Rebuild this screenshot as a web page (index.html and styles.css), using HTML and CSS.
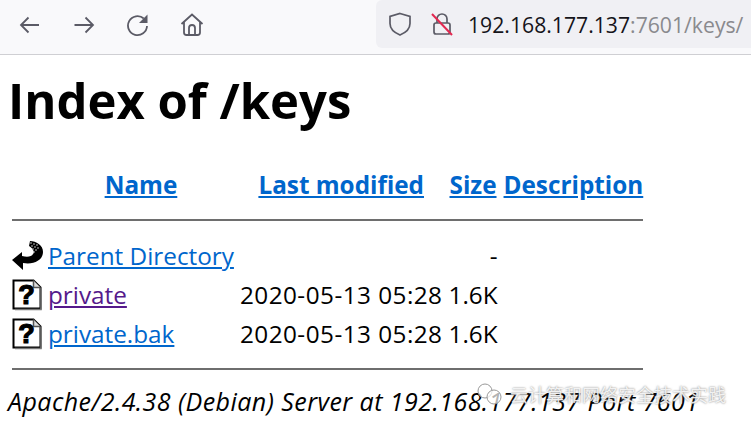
FILE: index.html
```html
<!DOCTYPE html>
<html lang="en">

<head>
    <meta charset="UTF-8">
    <title>Index of /keys</title>
    <link rel="stylesheet" href="styles.css">
</head>

<body>
    <div class="toolbar">
        <div class="nav-buttons">
            <svg class="icon" viewBox="0 0 24 24"><path d="M21 12H3M10.500 4.500 3 12l7.500 7.500"/></svg>
            <svg class="icon" viewBox="0 0 24 24"><path d="M2.500 12H21M13.500 4.500 21 12l-7.500 7.500"/></svg>
            <svg class="icon" viewBox="0 0 24 24"><path d="M21 13a9.500 9.500 0 1 1-3.200-7.500"/><path class="solid" d="M21.500 1.500v8.500h-8.500z"/></svg>
            <svg class="icon" viewBox="0 0 24 24"><path d="M1.500 11 12 1.500 22.500 11M4 9v10.500a2.500 2.500 0 0 0 2.500 2.500h11a2.500 2.500 0 0 0 2.500-2.500V9M9 22v-7a3 3 0 0 1 6 0v7"/></svg>
        </div>
        <div class="urlbar">
            <svg class="icon-small" viewBox="0 0 24 24"><path d="M12 1.500 22 4.500v7c0 5-4 9-10 11.500C6 20.500 2 16.500 2 11.500v-7z"/></svg>
            <svg class="icon-small lock" viewBox="0 0 24 24"><path d="M7 11V7a5 5 0 0 1 10 0v4M6 11h12a2 2 0 0 1 2 2v7a2 2 0 0 1-2 2H6a2 2 0 0 1-2-2v-7a2 2 0 0 1 2-2z"/><path class="slash" d="M2 2l20 21"/></svg>
            <span class="url">192.168.177.137<span class="url-rest">:7601/keys/</span></span>
        </div>
    </div>

    <div class="page">
        <h1>Index of /keys</h1>
        <table>
            <tr>
                <th class="col-icon"></th>
                <th class="col-name"><a href="#">Name</a></th>
                <th><a href="#">Last modified</a></th>
                <th><a href="#">Size</a></th>
                <th><a href="#">Description</a></th>
            </tr>
            <tr>
                <th colspan="5" class="rule-cell"><hr></th>
            </tr>
            <tr>
                <td class="col-icon">
                    <svg class="file-icon" viewBox="0 0 32 32">
                        <path class="back-arrow" d="M0 20 10 12v4c7 2 11 0 12-4-1-3-3-5-5-6l1-5c6 0 13 4 13 11 0 8-9 13-20 11v7z"/>
                        <path class="back-dots" d="M18 3h2M21 4h2M24 5h2M19 6h2M22 7h2M25 8h2M20 9h2M23 10h2M21 12h2"/>
                    </svg>
                </td>
                <td class="col-name"><a href="#">Parent Directory</a></td>
                <td></td>
                <td class="size">-</td>
                <td></td>
            </tr>
            <tr>
                <td class="col-icon">
                    <svg class="file-icon" viewBox="0 0 32 32">
                        <path class="sheet" d="M1.500 1.500h20l7 7v21h-27z"/>
                        <path class="fold" d="M21.500 1.500v7h7"/>
                        <path class="shade" d="M29 9v21.500H3"/>
                        <text class="mark" x="14.500" y="25">?</text>
                    </svg>
                </td>
                <td class="col-name"><a class="visited" href="#">private</a></td>
                <td class="date">2020-05-13 05:28</td>
                <td class="size">1.6K</td>
                <td></td>
            </tr>
            <tr>
                <td class="col-icon">
                    <svg class="file-icon" viewBox="0 0 32 32">
                        <path class="sheet" d="M1.500 1.500h20l7 7v21h-27z"/>
                        <path class="fold" d="M21.500 1.500v7h7"/>
                        <path class="shade" d="M29 9v21.500H3"/>
                        <text class="mark" x="14.500" y="25">?</text>
                    </svg>
                </td>
                <td class="col-name"><a href="#">private.bak</a></td>
                <td class="date">2020-05-13 05:28</td>
                <td class="size">1.6K</td>
                <td></td>
            </tr>
            <tr>
                <th colspan="5" class="rule-cell"><hr></th>
            </tr>
        </table>
        <address>Apache/2.4.38 (Debian) Server at 192.168.177.137 Port 7601</address>
    </div>

    <!-- watermark over the page -->
    <div class="watermark">
        <svg class="wm-icon" viewBox="0 0 28 24"><circle cx="9" cy="9" r="7"/><circle cx="18" cy="15" r="7"/></svg>
        <span>云计算和网络安全技术实践</span>
    </div>
</body>

</html>
```
FILE: styles.css
```css
* {
    box-sizing: border-box;
}

body {
    font-family: "Open Sans", "Noto Sans", Arial, sans-serif;
    font-size: 24px;
    margin: 0;
    padding: 0;
    height: 428px;
    overflow: hidden;
    position: relative;
    color: black;
    background-color: white;
}

/* Browser toolbar */
.toolbar {
    display: flex;
    justify-content: space-between;
    height: 55px;
    padding-left: 18px;
    background-color: #f9f9fb;
    border-bottom: 1px solid #cfcfd3;
}

.nav-buttons {
    display: flex;
    align-items: center;
    gap: 30px;
    height: 50px;
}

.icon {
    width: 24px;
    height: 24px;
    fill: none;
    stroke: #5b5b66;
    stroke-width: 1.8;
}

.icon .solid {
    fill: #5b5b66;
    stroke: none;
}

.urlbar {
    display: flex;
    align-items: center;
    width: 375px;
    height: 48px;
    padding-left: 12px;
    background-color: #f0f0f4;
    border-radius: 6px 0 0 6px;
}

.icon-small {
    width: 24px;
    height: 24px;
    fill: none;
    stroke: #5b5b66;
    stroke-width: 1.7;
    margin-right: 18px;
}

.lock {
    margin-right: 14px;
}

.slash {
    stroke: #e22850;
    stroke-width: 2;
}

.url {
    font-family: "Open Sans", sans-serif;
    font-size: 21.2px;
    color: #15141a;
}

.url-rest {
    color: #8a8a8e;
}

/* Directory listing */
.page {
    padding: 0 8px;
}

h1 {
    font-size: 49px;
    font-weight: bold;
    line-height: 64px;
    margin: 13px 0 33px;
}

table {
    border-spacing: 4px 0;
    font-size: 24.3px;
}

th,
td {
    padding: 0 0 0 2px;
    height: 39px;
    white-space: nowrap;
}

a {
    color: #0066cc;
}

a.visited {
    color: #551a8b;
}

.col-icon {
    width: 32px;
    padding: 0;
}

.col-name {
    padding-left: 0;
}

.date {
    letter-spacing: 0.47px;
}

.size {
    text-align: right;
}

.rule-cell {
    height: 32px;
    padding: 0;
}

hr {
    margin: 0;
    border: 0;
    border-top: 2px solid #6e6e6e;
}

.file-icon {
    display: block;
    width: 32px;
    height: 32px;
}

.back-arrow {
    fill: black;
}

.back-dots {
    stroke: #bbb;
    stroke-width: 1;
}

.sheet {
    fill: white;
    stroke: black;
    stroke-width: 2;
}

.fold {
    fill: #ddd;
    stroke: #555;
    stroke-width: 1.5;
}

.shade {
    fill: none;
    stroke: #777;
    stroke-width: 1.5;
}

.mark {
    font-family: "Liberation Sans", sans-serif;
    font-size: 27px;
    font-weight: bold;
    text-anchor: middle;
    stroke: black;
    stroke-width: 1.2;
}

address {
    font-size: 25px;
    line-height: 32px;
    font-style: italic;
    letter-spacing: 0.45px;
    white-space: nowrap;
}

/* Watermark */
.watermark {
    position: absolute;
    left: 476px;
    top: 381px;
    display: flex;
    align-items: center;
    gap: 6px;
    font-family: "Noto Sans CJK SC", sans-serif;
    font-size: 18px;
    color: rgba(255, 255, 255, 0.85);
    text-shadow: 0 0 2px #777;
}

.wm-icon {
    width: 28px;
    height: 24px;
    fill: rgba(255, 255, 255, 0.7);
    stroke: #999;
    stroke-width: 1;
}
```
